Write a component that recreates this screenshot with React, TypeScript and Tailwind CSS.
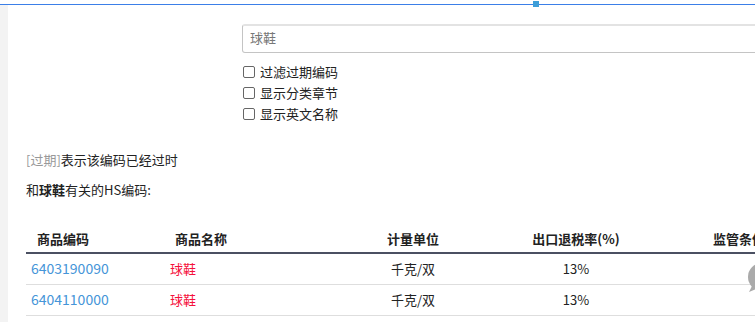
import React from 'react';

const rows = [
  { code: '6403190090', name: '球鞋', unit: '千克/双', rate: '13%' },
  { code: '6404110000', name: '球鞋', unit: '千克/双', rate: '13%' },
];

const options = ['过滤过期编码', '显示分类章节', '显示英文名称'];

export default function App() {
  return (
    <div
      className="relative w-[755px] h-[322px] overflow-hidden bg-white text-[13px] text-[#333]"
      style={{ fontFamily: '"Noto Sans CJK SC", "Liberation Sans", sans-serif' }}
    >
      {/* top selection line */}
      <div className="h-[4px]" />
      <div className="relative h-px bg-[#3b7fe8]">
        <div className="absolute left-[533px] top-[-3px] w-[6px] h-[6px] bg-[#3d9ed8]" />
      </div>

      <div className="flex h-[317px]">
        <div className="w-[8px] shrink-0 bg-[#f3f3f3]" />

        <div className="flex-1 pt-[19px]">
          {/* search form */}
          <div className="ml-[234px]">
            <div className="h-[29px] w-[560px] rounded-[3px] border border-[#c4c4c4] border-t-2 border-t-[#e3e3e3] pl-[7px] pb-[3px] flex items-center text-[#777] leading-none">
              球鞋
            </div>
            <div className="mt-[8px] flex flex-col">
              {options.map((o) => (
                <label key={o} className="flex items-center h-[21px] gap-[5px] text-[#222]">
                  <input
                    type="checkbox"
                    className="appearance-none w-[12px] h-[12px] border border-[#666] rounded-[2px] bg-white ml-px"
                  />
                  <span className="leading-none">{o}</span>
                </label>
              ))}
            </div>
          </div>

          {/* notes */}
          <div className="ml-[18px] mt-[25px] leading-[21px] text-[#222]">
            <span className="text-[#999]">[过期]</span>表示该编码已经过时
          </div>
          <div className="ml-[18px] mt-[9px] leading-[21px] text-[#222]">
            和<span className="font-bold">球鞋</span>有关的HS编码:
          </div>

          {/* results table */}
          <table className="ml-[18px] mt-[27px] table-fixed border-collapse w-[800px]">
            <colgroup>
              <col className="w-[139px]" />
              <col className="w-[185px]" />
              <col className="w-[126px]" />
              <col className="w-[200px]" />
              <col className="w-[150px]" />
            </colgroup>
            <thead>
              <tr className="h-[26px] border-b-2 border-[#4b5062] text-[#222] font-bold">
                <th className="pl-[11px] pb-[2px] text-left font-bold">商品编码</th>
                <th className="pl-[10px] pb-[2px] text-left font-bold">商品名称</th>
                <th className="pb-[2px] text-center font-bold">计量单位</th>
                <th className="pb-[2px] text-center font-bold">出口退税率(%)</th>
                <th className="pl-[37px] pb-[2px] text-left font-bold">监管条件</th>
              </tr>
            </thead>
            <tbody>
              {rows.map((r) => (
                <tr key={r.code} className="h-[31px] border-b border-[#dedede]">
                  <td className="pl-[5px] text-[14px] text-[#4595d8]">{r.code}</td>
                  <td className="pl-[5px] text-[#f5103c]">{r.name}</td>
                  <td className="text-center text-[#222]">{r.unit}</td>
                  <td className="text-center text-[#222]">{r.rate}</td>
                  <td />
                </tr>
              ))}
            </tbody>
          </table>
        </div>
      </div>

      {/* floating chat button, mostly off-screen */}
      <svg className="absolute left-[740px] top-[262px]" width="15" height="32" viewBox="0 0 15 32">
        <circle cx="22" cy="15" r="14" fill="#aaaaaa" />
        <path d="M12 24 L9 30 L16 27 Z" fill="#aaaaaa" />
      </svg>
    </div>
  );
}
